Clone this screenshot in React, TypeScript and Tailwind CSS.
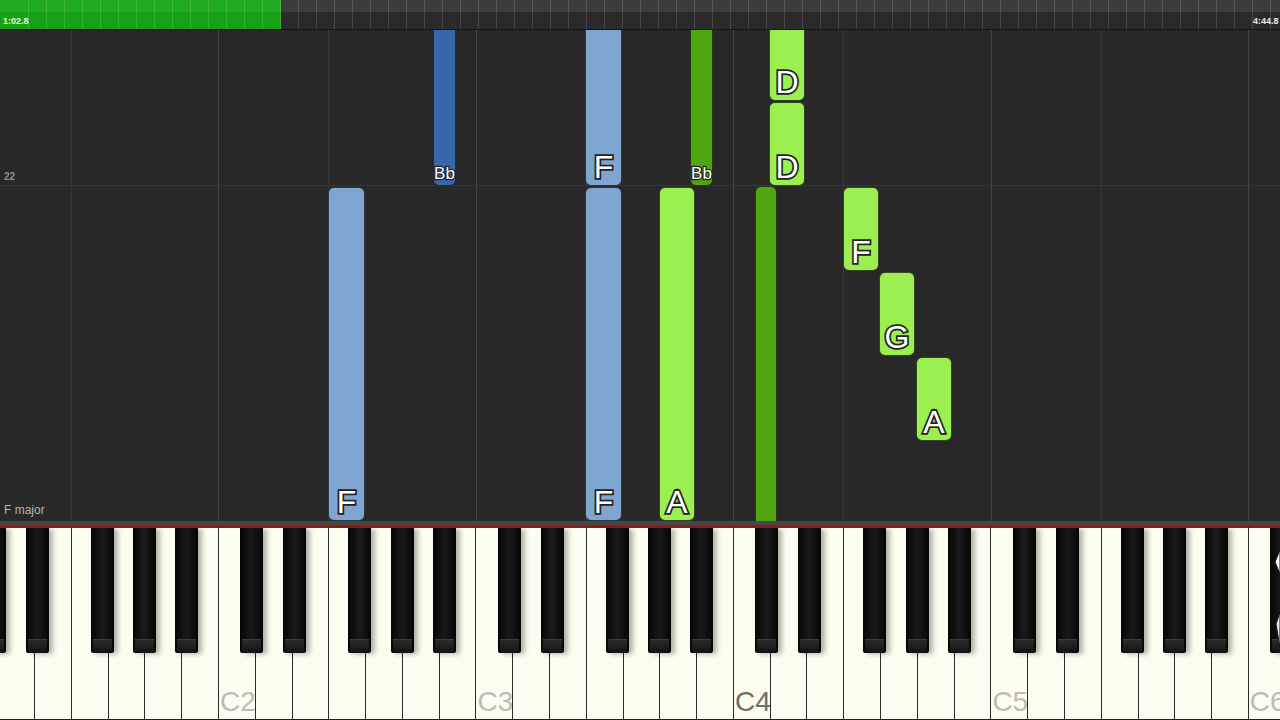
import React from "react";

const OCT = 257.5;
const WW = OCT / 7;
const C1 = -39.5;
const BLACK_OFFSETS = [22, 65, 130, 172.5, 214.5];

type NoteData = {
  x: number;
  w: number;
  top: number;
  h: number;
  color: string;
  label?: string;
  small?: boolean;
};

const BLUE_L = "bg-[#7fa6d0]";
const BLUE_D = "bg-[#3766aa]";
const GREEN_L = "bg-[#9bef50]";
const GREEN_D = "bg-[#4fa60e]";

const notes: NoteData[] = [
  { x: 328, w: 37, top: 157, h: 334, color: BLUE_L, label: "F" },
  { x: 433, w: 23, top: -10, h: 166, color: BLUE_D, label: "Bb", small: true },
  { x: 585, w: 37, top: -10, h: 166, color: BLUE_L, label: "F" },
  { x: 585, w: 37, top: 157, h: 334, color: BLUE_L, label: "F" },
  { x: 659, w: 36, top: 157, h: 334, color: GREEN_L, label: "A" },
  { x: 690, w: 23, top: -10, h: 166, color: GREEN_D, label: "Bb", small: true },
  { x: 755, w: 22, top: 156, h: 345, color: GREEN_D },
  { x: 769, w: 36, top: -10, h: 81, color: GREEN_L, label: "D" },
  { x: 769, w: 36, top: 72, h: 84, color: GREEN_L, label: "D" },
  { x: 843, w: 36, top: 157, h: 84, color: GREEN_L, label: "F" },
  { x: 879, w: 36, top: 242, h: 84, color: GREEN_L, label: "G" },
  { x: 916, w: 36, top: 327, h: 84, color: GREEN_L, label: "A" },
];

function Note({ n }: { n: NoteData }) {
  return (
    <div
      className={`absolute rounded-[6px] border border-[#1b1b1b]/80 ${n.color} flex items-end justify-center`}
      style={{ left: n.x, top: n.top, width: n.w, height: n.h }}
    >
      {n.label && (
        <span
          className={
            n.small
              ? "mb-[3px] text-[17px] leading-none text-white [-webkit-text-stroke:2.5px_#222] [paint-order:stroke_fill]"
              : "mb-[2px] text-[32px] leading-none text-white [-webkit-text-stroke:3.5px_#222] [paint-order:stroke_fill]"
          }
        >
          {n.label}
        </span>
      )}
    </div>
  );
}

function TopBar() {
  return (
    <div className="relative h-[30px] flex border-b border-[#151515]">
      <div className="w-[281px] flex flex-col">
        <div className="h-[12px] bg-[#22ab22]" />
        <div className="flex-1 bg-[#16a116]" />
      </div>
      <div className="flex-1 flex flex-col">
        <div className="h-[12px] bg-[#3c3c3c]" />
        <div className="flex-1 bg-[#2a2a2a]" />
      </div>
      <div className="absolute inset-0 flex pl-[11px]">
        {Array.from({ length: 72 }).map((_, i) => (
          <div key={i} className="w-[18px] shrink-0 border-r border-white/15" />
        ))}
      </div>
      <span className="absolute left-[3px] top-[17px] text-[9px] leading-none font-bold text-white/90">
        1:02.8
      </span>
      <span className="absolute left-[1253px] top-[17px] text-[9px] leading-none font-bold text-white/90 whitespace-nowrap">
        4:44.8
      </span>
    </div>
  );
}

function NoteArea() {
  const cLines = [218, 475.5, 733, 990.5, 1248];
  const fLines = [71, 328, 585.5, 843, 1100.5];
  return (
    <div className="relative h-[491px] bg-[#282828] overflow-hidden">
      {fLines.map((x) => (
        <div key={"f" + x} className="absolute top-0 bottom-0 w-px bg-[#363636]" style={{ left: x }} />
      ))}
      {cLines.map((x) => (
        <div key={"c" + x} className="absolute top-0 bottom-0 w-px bg-[#464646]" style={{ left: x }} />
      ))}
      <div className="absolute left-0 right-0 top-[155px] h-px bg-[#363636]" />
      <span className="absolute left-[4px] top-[142px] text-[10px] leading-none font-bold text-[#8f8f8f]">22</span>
      <span className="absolute left-[4px] top-[474px] text-[12px] leading-none text-[#b3b3b3]">F major</span>
      {notes.map((n, i) => (
        <Note key={i} n={n} />
      ))}
    </div>
  );
}

function Keyboard() {
  const whites = Array.from({ length: 36 });
  const blacks: number[] = [];
  for (let o = 0; o < 6; o++) {
    for (const off of BLACK_OFFSETS) blacks.push(C1 + OCT * o + off);
  }
  const labelColor: Record<number, string> = {
    7: "text-[#bcbcb4]",
    14: "text-[#bcbcb4]",
    21: "text-[#6f6f6a]",
    28: "text-[#bcbcb4]",
    35: "text-[#bcbcb4]",
  };
  return (
    <div className="flex flex-col">
      <div className="h-[4px] bg-[#474747]" />
      <div className="h-[3px] bg-[#8c1b1b]" />
      <div className="relative h-[192px] overflow-hidden bg-[#fdfdef]">
        <div className="flex h-full ml-[-39.5px]">
          {whites.map((_, i) => (
            <div
              key={i}
              className="shrink-0 h-full border-l border-[#2a2a2a] bg-[#fdfdef] flex items-end pl-[1px] pb-[3px] border-b border-b-[#222]"
              style={{ width: WW }}
            >
              {i % 7 === 0 && i > 0 && (
                <span className={`text-[28px] leading-none whitespace-nowrap ${labelColor[i]}`}>C{i / 7 + 1}</span>
              )}
            </div>
          ))}
        </div>
        {blacks.map((x) => (
          <div
            key={x}
            className="absolute top-0 w-[23px] h-[125px] rounded-b-[2px] bg-[linear-gradient(90deg,#050505,#1a1a1a_50%,#050505)] shadow-[4px_1px_5px_rgba(0,0,0,0.3)] flex flex-col justify-end"
            style={{ left: x }}
          >
            <div className="h-[13px] mx-[2px] mb-[1px] rounded-b-[2px] bg-[linear-gradient(#2a2a2a,#141414)] border-t border-[#3d3d3d]" />
          </div>
        ))}
        <svg className="absolute right-0 top-[20px]" width="6" height="110" viewBox="0 0 6 110">
          <path d="M6 2 L1 14 L6 26 Z" fill="#fff" stroke="#111" strokeWidth="1" />
          <path d="M6 64 L2 76 L6 100 Z" fill="#e8e8e8" stroke="#111" strokeWidth="1" />
        </svg>
      </div>
    </div>
  );
}

export default function App() {
  return (
    <div className="w-[1280px] h-[720px] overflow-hidden bg-[#282828] flex flex-col font-['Liberation_Sans',Arial,sans-serif]">
      <TopBar />
      <NoteArea />
      <Keyboard />
    </div>
  );
}
